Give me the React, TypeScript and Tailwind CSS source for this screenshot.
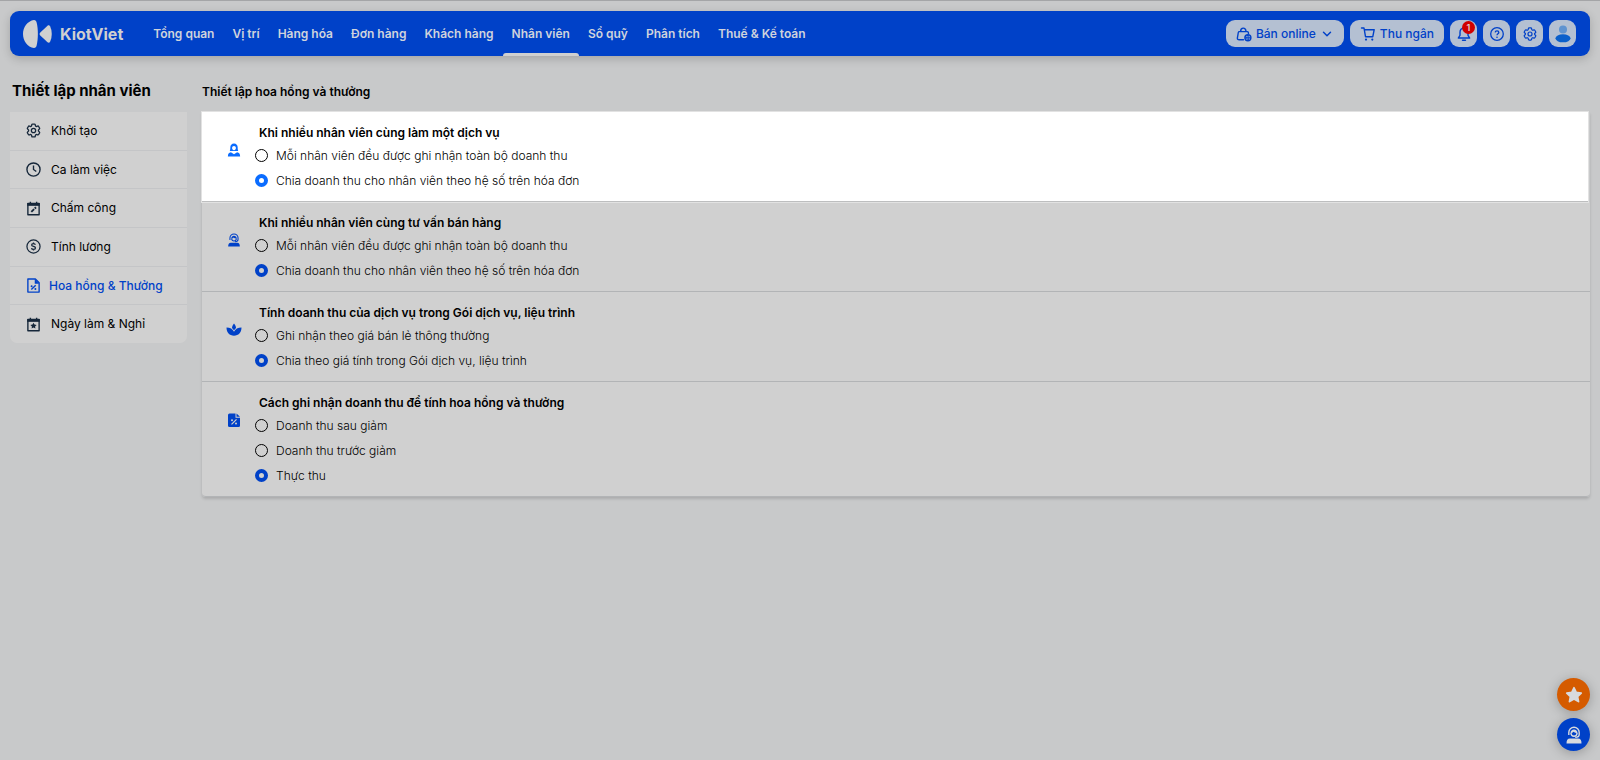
import React, { useState } from 'react';
import { ChevronDown } from 'lucide-react';
import { HiOutlineCog6Tooth } from 'react-icons/hi2';

interface IconProps {
  className?: string;
}

interface SettingGroup {
  id: string;
  title: string;
  icon: React.FC<IconProps>;
  options: string[];
  selected: number;
}

// Icons

const Logo: React.FC<IconProps> = ({ className }) => (
  <svg viewBox="0 0 30 28" className={className} fill="currentColor" aria-hidden="true">
    <path d="M11 0C12.500 0 13.300 1 13.700 2.800C15.300 9 15.300 19 13.700 25.200C13.300 27 12.500 28 11 28C4.500 27 0 21 0 14S4.500 1 11 0Z" />
    <path d="M17.300 12.500L24.500 5.800C25.500 5 26.500 5.200 27.200 6.500C29.300 11 29.300 17 27.200 21.500C26.500 22.800 25.500 23 24.500 22.200L17.300 15.500C16.300 14.500 16.300 13.500 17.300 12.500Z" />
  </svg>
);

const GearIcon: React.FC<IconProps> = ({ className }) => (
  <HiOutlineCog6Tooth className={`scale-115 ${className ?? ''}`} strokeWidth={1.8} aria-hidden="true" />
);

const ClockIcon: React.FC<IconProps> = ({ className }) => (
  <svg viewBox="0 0 24 24" className={className} fill="none" stroke="currentColor" strokeWidth="2.200" aria-hidden="true">
    <circle cx="12" cy="12" r="10.500" />
    <path d="M12 5.500V12l4.500 3.200" />
  </svg>
);

const CalendarEditIcon: React.FC<IconProps> = ({ className }) => (
  <svg viewBox="0 0 24 24" className={className} fill="none" stroke="currentColor" strokeWidth="2.200" aria-hidden="true">
    <path d="M3 4h18v18H3z" strokeLinejoin="round" />
    <path d="M2 5.500h20" strokeWidth="4.500" />
    <path d="M7 1v4M17 1v4" />
    <path d="M8.500 17.500l4.500-4.500" strokeWidth="3" />
    <path d="M14 12l2-2" strokeWidth="3" />
  </svg>
);

const CalendarStarIcon: React.FC<IconProps> = ({ className }) => (
  <svg viewBox="0 0 24 24" className={className} fill="none" stroke="currentColor" strokeWidth="2.200" aria-hidden="true">
    <path d="M3 4h18v18H3z" strokeLinejoin="round" />
    <path d="M2 5.500h20" strokeWidth="4.500" />
    <path d="M7 1v4M17 1v4" />
    <path
      d="M12 9l1.600 3.100 3.400.5-2.500 2.400.6 3.500-3.100-1.700-3.100 1.700.6-3.500L7 12.600l3.400-.5z"
      fill="currentColor"
      stroke="none"
    />
  </svg>
);

const DollarIcon: React.FC<IconProps> = ({ className }) => (
  <svg viewBox="0 0 24 24" className={className} fill="none" stroke="currentColor" strokeWidth="2" aria-hidden="true">
    <circle cx="12" cy="12" r="10.500" />
    <path d="M15 9.200c-.3-1.200-1.400-1.800-3-1.800s-3 .8-3 2.200c0 3.200 6.200 1.500 6.200 4.800 0 1.400-1.400 2.300-3.200 2.300s-3-.8-3.200-2.100M12 5.500v2M12 16.500v2" />
  </svg>
);

const FilePercentIcon: React.FC<IconProps> = ({ className }) => (
  <svg viewBox="0 0 24 24" className={className} fill="none" stroke="currentColor" strokeWidth="2.200" aria-hidden="true">
    <path d="M3 1.500h12l6 6v15H3z" strokeLinejoin="round" />
    <path d="M14 1.500V9h7z" fill="currentColor" stroke="none" />
    <path d="M8.500 18.500l7-7" />
    <circle cx="9" cy="13" r="1.600" fill="currentColor" stroke="none" />
    <circle cx="15" cy="17.500" r="1.600" fill="currentColor" stroke="none" />
  </svg>
);

const StaffIcon: React.FC<IconProps> = ({ className }) => (
  <svg viewBox="0 0 14 16" className={className} fill="currentColor" aria-hidden="true">
    <path
      fillRule="evenodd"
      d="M7 0.500C4.300 0.500 2.800 2.500 2.800 4.800C2.800 6.800 2.500 8 2.200 9H11.800C11.500 8 11.200 6.800 11.200 4.800C11.200 2.500 9.700 0.500 7 0.500ZM7 3.500C8.300 3.500 9.200 4.400 9.200 5.700C9.200 7.100 8.300 8.200 7 8.200S4.800 7.100 4.800 5.700C4.800 4.400 5.700 3.500 7 3.500Z"
    />
    <path d="M3.500 10.500L7 12.800L10.500 10.500C13 11 14 12.500 14 15.300H0C0 12.500 1 11 3.500 10.500Z" />
  </svg>
);

const SupportIcon: React.FC<IconProps> = ({ className }) => (
  <svg viewBox="0 0 16 18" className={className} fill="none" stroke="currentColor" aria-hidden="true">
    <path d="M2.800 9V6.500a5.200 5.200 0 0 1 10.400 0v2c0 1.700-1.500 2.800-4 2.800" strokeWidth="1.400" />
    <path d="M4.500 7c0-4.700 7-4.700 7 0-1.600 0-3-.3-4-1.200-.6.800-1.500 1.200-3 1.200z" fill="currentColor" stroke="none" />
    <path d="M4.900 7c.2 2.100 1.400 3.300 3.100 3.300S10.900 9.100 11.100 7" strokeWidth="1.400" />
    <path d="M.5 17.500c0-3.200 1-4.900 3.500-4.900h8c2.500 0 3.500 1.700 3.500 4.900z" fill="currentColor" stroke="none" />
  </svg>
);

const LotusIcon: React.FC<IconProps> = ({ className }) => (
  <svg viewBox="0 0 16 14" className={className} fill="currentColor" aria-hidden="true">
    <path d="M8 .5C9.300 2 10 3.500 10 5L8 7.200L6 5C6 3.500 6.700 2 8 .5Z" />
    <path d="M.5 4.500C4 4.500 6.800 6 8 8.800C9.200 6 12 4.500 15.500 4.500C15.500 9.500 12.500 12.700 8 12.700S.5 9.500 .5 4.500Z" />
  </svg>
);

const FilePercentSolidIcon: React.FC<IconProps> = ({ className }) => (
  <svg viewBox="0 0 12 14" className={className} aria-hidden="true">
    <path d="M1.500 0.500H7.500V4.800H12V12.700Q12 14 10.500 14H1.500Q0 14 0 12.700V2Q0 0.500 1.500 0.500Z" fill="currentColor" />
    <path d="M8.500 0.500L12 3.800H8.500Z" fill="currentColor" />
    <path d="M3.500 11.300L8.500 6.300" stroke="#d0d0d0" strokeWidth="1.200" />
    <circle cx="4" cy="7.300" r="1" fill="#d0d0d0" />
    <circle cx="8" cy="10.600" r="1" fill="#d0d0d0" />
  </svg>
);

const BagGlobeIcon: React.FC<IconProps> = ({ className }) => (
  <svg viewBox="0 0 16 16" className={className} fill="none" stroke="currentColor" strokeWidth="1.400" aria-hidden="true">
    <path d="M7.500 13.800H3.200C1.800 13.800 1.200 13 1.400 11.800L2.300 6.500C2.400 5.900 2.700 5.600 3.300 5.600H11.200C11.800 5.600 12.200 5.900 12.300 6.500L12.500 7.500" strokeLinecap="round" />
    <path d="M4.600 5.500C4.600 1 10 1 10 5.500" />
    <circle cx="11.900" cy="11.800" r="3" />
    <path d="M9 11.800H15M11.900 9C10.500 10.800 10.500 12.800 11.900 14.600C13.300 12.800 13.300 10.800 11.900 9Z" strokeWidth="1" />
  </svg>
);

const CartIcon: React.FC<IconProps> = ({ className }) => (
  <svg viewBox="0 0 16 16" className={className} fill="none" stroke="currentColor" strokeWidth="1.400" aria-hidden="true">
    <path d="M1.500 2H4L5.500 10.700H12.800L14.200 3.700H4.500" strokeLinejoin="round" strokeLinecap="round" />
    <circle cx="6" cy="13.600" r="1.100" fill="currentColor" stroke="none" />
    <circle cx="12.300" cy="13.600" r="1.100" fill="currentColor" stroke="none" />
  </svg>
);

const BellIcon: React.FC<IconProps> = ({ className }) => (
  <svg viewBox="0 0 16 16" className={className} fill="none" stroke="currentColor" strokeWidth="1.400" aria-hidden="true">
    <path d="M8 2C5.500 2 4 4 4 6.200V9.300L2.300 12H13.700L12 9.300V6.200C12 4 10.500 2 8 2Z" strokeLinejoin="round" />
    <path d="M6.600 14.200H9.400" strokeLinecap="round" strokeWidth="1.600" />
  </svg>
);

const HelpIcon: React.FC<IconProps> = ({ className }) => (
  <svg viewBox="0 0 16 16" className={className} fill="none" stroke="currentColor" strokeWidth="1.300" aria-hidden="true">
    <circle cx="8" cy="8" r="6.300" />
    <path d="M6.200 6.400C6.300 4.200 9.800 4.300 9.800 6.400C9.800 7.700 8 7.800 8 9.300" />
    <circle cx="8" cy="11.200" r="0.800" fill="currentColor" stroke="none" />
  </svg>
);

const AvatarIcon: React.FC<IconProps> = ({ className }) => (
  <svg viewBox="0 0 16 18" className={className} aria-hidden="true">
    <circle cx="8" cy="4.500" r="4" fill="#5f93d0" />
    <ellipse cx="8" cy="13.300" rx="7.500" ry="4" fill="#0a5fcb" />
  </svg>
);

const StarIcon: React.FC<IconProps> = ({ className }) => (
  <svg viewBox="0 0 20 20" className={className} fill="currentColor" stroke="currentColor" strokeWidth="2" strokeLinejoin="round" aria-hidden="true">
    <path d="M10 2l2.400 5.200 5.600.7-4.100 3.800 1.100 5.600-5-2.800-5 2.800 1.100-5.600L2 7.900l5.600-.7z" />
  </svg>
);

// Data

const navItems = [
  'Tổng quan',
  'Vị trí',
  'Hàng hóa',
  'Đơn hàng',
  'Khách hàng',
  'Nhân viên',
  'Sổ quỹ',
  'Phân tích',
  'Thuế & Kế toán',
];

const menuItems = [
  { label: 'Khởi tạo', icon: GearIcon },
  { label: 'Ca làm việc', icon: ClockIcon },
  { label: 'Chấm công', icon: CalendarEditIcon },
  { label: 'Tính lương', icon: DollarIcon },
  { label: 'Hoa hồng & Thưởng', icon: FilePercentIcon },
  { label: 'Ngày làm & Nghỉ', icon: CalendarStarIcon },
];

const groups: SettingGroup[] = [
  {
    id: 'service',
    title: 'Khi nhiều nhân viên cùng làm một dịch vụ',
    icon: StaffIcon,
    options: [
      'Mỗi nhân viên đều được ghi nhận toàn bộ doanh thu',
      'Chia doanh thu cho nhân viên theo hệ số trên hóa đơn',
    ],
    selected: 1,
  },
  {
    id: 'consult',
    title: 'Khi nhiều nhân viên cùng tư vấn bán hàng',
    icon: SupportIcon,
    options: [
      'Mỗi nhân viên đều được ghi nhận toàn bộ doanh thu',
      'Chia doanh thu cho nhân viên theo hệ số trên hóa đơn',
    ],
    selected: 1,
  },
  {
    id: 'package',
    title: 'Tính doanh thu của dịch vụ trong Gói dịch vụ, liệu trình',
    icon: LotusIcon,
    options: ['Ghi nhận theo giá bán lẻ thông thường', 'Chia theo giá tính trong Gói dịch vụ, liệu trình'],
    selected: 1,
  },
  {
    id: 'revenue',
    title: 'Cách ghi nhận doanh thu để tính hoa hồng và thưởng',
    icon: FilePercentSolidIcon,
    options: ['Doanh thu sau giảm', 'Doanh thu trước giảm', 'Thực thu'],
    selected: 2,
  },
];

const Header = () => (
  <header className="mx-2.5 mt-2.5 flex h-[45px] items-center rounded-[9px] bg-[#0041c8] pr-3.5 pl-[13px] text-[#cfd3dc] shadow-[0_3px_10px_rgba(0,0,0,0.18)]">
    <a href="#home" className="flex items-center gap-[7px] text-[#d0d0d0]">
      <Logo className="h-7 w-[30px]" />
      <span className="text-base font-bold">KiotViet</span>
    </a>
    <nav className="ml-[21px] flex h-full">
      {navItems.map((item) => (
        <a key={item} href="#nav" className="relative flex items-center px-[9px] text-xs font-semibold whitespace-nowrap">
          {item}
          {item === 'Nhân viên' && <span className="absolute inset-x-0 bottom-0 h-[3px] rounded-t-[3px] bg-[#d0d0d0]" />}
        </a>
      ))}
    </nav>
    <div className="ml-auto flex items-center gap-1.5 text-xs font-medium text-[#0041c8]">
      <button type="button" className="flex h-[27px] items-center rounded-[9px] bg-[#b4c0d2] px-2.5">
        <BagGlobeIcon className="mr-1 size-4" />
        Bán online
        <ChevronDown className="ml-1 size-3.5" strokeWidth={2.5} />
      </button>
      <button type="button" className="flex h-[27px] items-center gap-1 rounded-[9px] bg-[#b4c0d2] px-2.5">
        <CartIcon className="size-4" />
        Thu ngân
      </button>
      <button type="button" aria-label="Thông báo" className="relative flex size-[27px] items-center justify-center rounded-[9px] bg-[#b4c0d2]">
        <BellIcon className="size-4" />
        <span className="absolute top-px left-3 flex size-[13px] items-center justify-center rounded-full bg-[#d00000] text-[9px] font-semibold text-[#e0d0d0]">
          1
        </span>
      </button>
      <button type="button" aria-label="Trợ giúp" className="flex size-[27px] items-center justify-center rounded-[9px] bg-[#b4c0d2]">
        <HelpIcon className="size-4" />
      </button>
      <button type="button" aria-label="Thiết lập" className="flex size-[27px] items-center justify-center rounded-[9px] bg-[#b4c0d2]">
        <GearIcon className="size-3.5" />
      </button>
      <button type="button" aria-label="Tài khoản" className="flex size-[27px] items-center justify-center rounded-[9px] bg-[#b4c0d2]">
        <AvatarIcon className="h-[18px] w-4" />
      </button>
    </div>
  </header>
);

const Sidebar = () => (
  <aside className="w-[177px] shrink-0">
    <h2 className="flex h-[41px] items-center pl-0.5 text-[15px] font-bold">Thiết lập nhân viên</h2>
    <ul className="flex h-[231px] flex-col rounded-b-[7px] bg-[#d0d0d0]">
      {menuItems.map(({ label, icon: Icon }) => {
        const active = label === 'Hoa hồng & Thưởng';
        return (
          <li key={label} className="flex-1 border-b border-[#c4c5c7] last:border-b-0">
            <a
              href="#menu"
              className={`flex h-full items-center pl-4 text-xs ${active ? 'gap-2 font-medium text-[#0041c8]' : 'gap-2.5 font-normal text-black'}`}
            >
              <Icon className={`size-[15px] ${active ? '' : 'text-[#16273a]'}`} />
              {label}
            </a>
          </li>
        );
      })}
    </ul>
  </aside>
);

const App: React.FC = () => {
  const [values, setValues] = useState<number[]>(groups.map((g) => g.selected));

  const handleSelect = (groupIndex: number, option: number) => {
    setValues(values.map((v, i) => (i === groupIndex ? option : v)));
  };

  return (
    <div className="min-h-screen border-t border-[#a4a5a7] bg-[#c8c9ca] font-['Inter','Noto_Sans',sans-serif] text-black">
      <Header />
      <div className="flex gap-[15px] px-2.5 pt-[15px]">
        <Sidebar />
        <main className="min-w-0 flex-1">
          <h1 className="flex h-[41px] items-center text-xs font-semibold">Thiết lập hoa hồng và thưởng</h1>
          <div className="rounded-b-[4px] shadow-[0_2px_3px_rgba(0,0,0,0.15)]">
            {groups.map((group, gi) => {
              const Icon = group.icon;
              const highlighted = gi === 0;
              return (
                <fieldset
                  key={group.id}
                  className={`flex border-b pb-2 ${
                    highlighted
                      ? 'mr-0.5 border-[#bdbebf] bg-white pt-[11px] pl-6 text-[#0a6cff] outline-1 outline-[#e2e2e2]'
                      : 'border-[#b2b4b6] bg-[#d0d0d0] pt-[11px] pl-6 text-[#0041c8] last:rounded-b-[4px]'
                  }`}
                >
                  <Icon className="mt-5 h-3.5 w-4" />
                  <div className="ml-[13px] text-xs text-black">
                    <legend className="flex h-5 items-center pl-1 font-semibold">{group.title}</legend>
                    {group.options.map((option, oi) => (
                      <label key={option} className="flex h-[25px] items-center gap-2 font-light">
                        <input
                          type="radio"
                          name={group.id}
                          checked={values[gi] === oi}
                          onChange={() => handleSelect(gi, oi)}
                          className={`size-[13px] appearance-none rounded-full border border-black checked:border-[4px] ${
                            highlighted ? 'checked:border-[#0a6cff]' : 'checked:border-[#0041c8]'
                          }`}
                        />
                        {option}
                      </label>
                    ))}
                  </div>
                </fieldset>
              );
            })}
          </div>
        </main>
      </div>
      <div className="fixed right-2.5 bottom-[9px] flex flex-col gap-[7px] text-[#d8dade]">
        <button type="button" aria-label="Đánh giá" className="flex size-[33px] items-center justify-center rounded-full bg-[#d55b00] shadow-[0_2px_12px_rgba(0,0,0,0.25)]">
          <StarIcon className="size-[18px]" />
        </button>
        <button type="button" aria-label="Hỗ trợ" className="flex size-[33px] items-center justify-center rounded-full bg-[#0041c8] shadow-[0_2px_12px_rgba(0,0,0,0.25)]">
          <SupportIcon className="h-[18px] w-4" />
        </button>
      </div>
    </div>
  );
};

export default App;
